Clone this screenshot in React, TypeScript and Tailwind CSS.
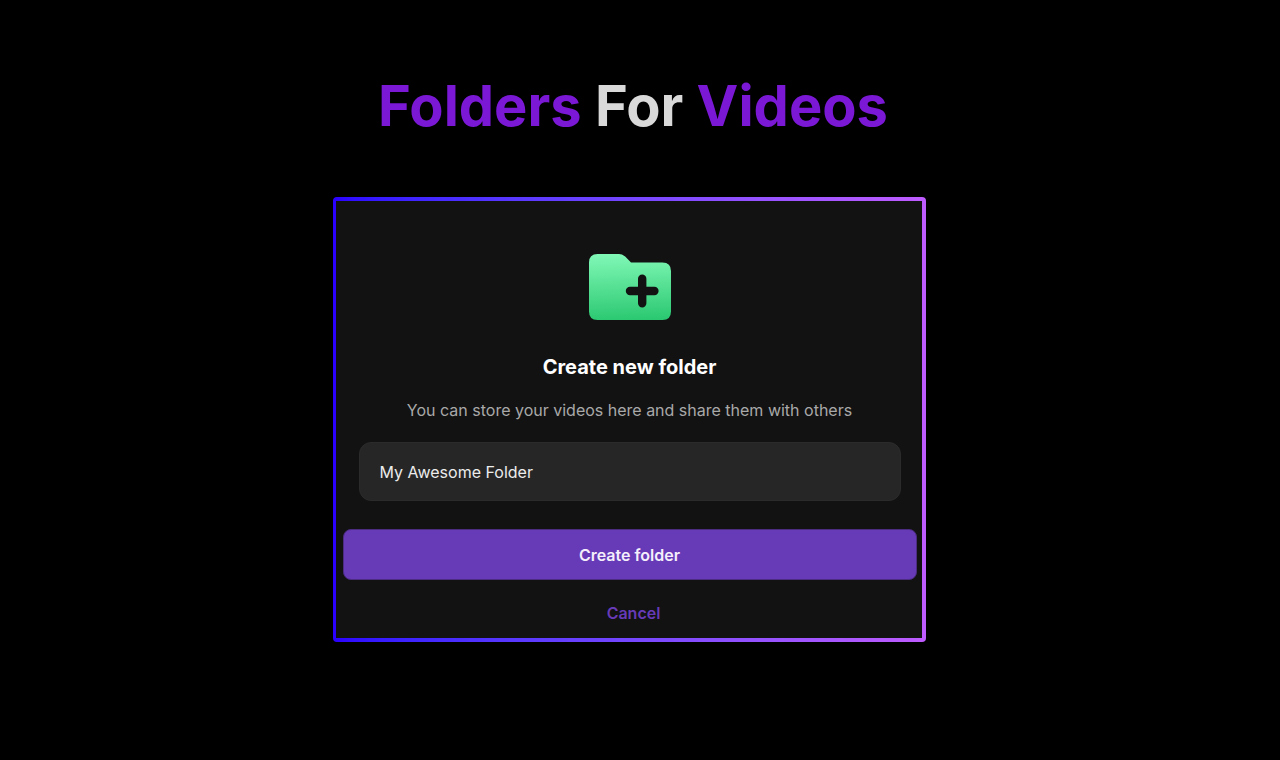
import { useState } from "react";

function FolderPlusIcon() {
  return (
    <svg viewBox="0 0 82 66" className="h-[66px] w-[82px]" aria-hidden="true">
      <defs>
        <linearGradient id="folder-fill" x1="0.48" y1="0" x2="0.52" y2="1">
          <stop offset="0" stopColor="#80f8b6" />
          <stop offset="1" stopColor="#2bc871" />
        </linearGradient>
      </defs>
      <path
        fill="url(#folder-fill)"
        d="M8.500 0H30Q33.600 0 36.200 2.600L42 8.400H73.500Q82 8.400 82 17V57.500Q82 66 73.500 66H8.500Q0 66 0 57.500V8.500Q0 0 8.500 0Z"
      />
      <path
        d="M53.200 24.800V49.200M41 37H65.400"
        stroke="#121212"
        strokeWidth="8.400"
        strokeLinecap="round"
      />
    </svg>
  );
}

export default function App() {
  const [name, setName] = useState("My Awesome Folder");

  return (
    <main className="flex min-h-screen flex-col items-center bg-black px-4 pt-[74px] pb-16 font-['Inter',sans-serif]">
      <h1 className="mr-3.5 text-center text-[56px] leading-16 font-bold text-[#7a18d6]">
        Folders <span className="text-[#d9d9d9]">For</span> Videos
      </h1>

      <div className="mt-[59px] mr-[22px] w-full max-w-[593px] rounded-[4px] bg-linear-to-r from-[#2b00ff] to-[#bf5cff] p-1 pl-[3px]">
        <form
          className="flex flex-col items-center bg-[#121212] pt-[53px] pr-[5px] pb-3 pl-[7px]"
          onSubmit={(event) => event.preventDefault()}
        >
          <FolderPlusIcon />
          <h2 className="mt-[31px] text-xl leading-8 font-bold text-white">Create new folder</h2>
          <p className="mt-[17px] text-center text-base leading-5 text-[#a9a9a9]">
            You can store your videos here and share them with others
          </p>
          <div className="mt-[22px] w-full px-4">
            <input
              type="text"
              aria-label="Folder name"
              value={name}
              onChange={(event) => setName(event.target.value)}
              className="h-[59px] w-full rounded-xl border border-[#2b2b2b] bg-[#262626] px-5 text-base text-[#ececec] outline-none"
            />
          </div>
          <button
            type="submit"
            className="mt-7 h-[51px] w-full rounded-lg border border-[#4b2c80] bg-[#673ab7] text-base font-semibold text-[#f4effb]"
          >
            Create folder
          </button>
          <button type="button" className="mt-5 ml-2 h-[26px] px-4 text-base font-semibold text-[#673ab7]">
            Cancel
          </button>
        </form>
      </div>
    </main>
  );
}
